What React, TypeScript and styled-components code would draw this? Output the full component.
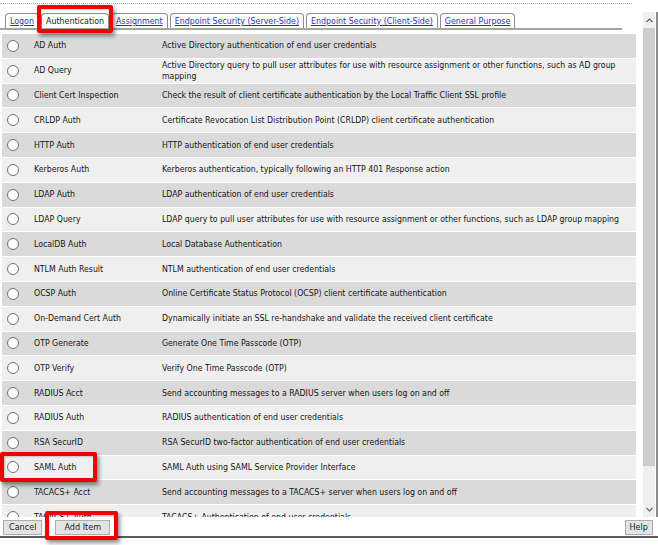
import React from "react";
import styled, { createGlobalStyle } from "styled-components";

const GlobalStyle = createGlobalStyle`
  html, body {
    margin: 0;
    padding: 0;
    background: #ffffff;
  }
  body {
    font-family: "DejaVu Sans Condensed", "Liberation Sans", Arial, sans-serif;
    overflow: hidden;
  }
`;

const Frame = styled.div`
  position: relative;
  width: 658px;
  height: 545px;
  background: #ffffff;
  overflow: hidden;
`;

const TopRule = styled.div`
  height: 3px;
  margin-right: 26px;
  border-bottom: 1px dotted #b4b4b4;
`;

const Body = styled.div`
  display: flex;
  height: 505px;
  margin-top: 8px;
  border-right: 2px solid #8a8a8a;
`;

const Pane = styled.div`
  display: flex;
  flex-direction: column;
  width: 643px;
  overflow: hidden;
`;

const TabBar = styled.div`
  display: flex;
  align-items: flex-end;
  gap: 2px;
  height: 15px;
  margin: 1px 21px 0 0;
  padding-left: 5px;
  border-bottom: 2px solid #a3a3a3;
`;

const Tab = styled.div<{ $active?: boolean }>`
  height: 14px;
  padding: 0 4px;
  border: 1px solid #8c8c8c;
  border-bottom: none;
  border-radius: 4px 4px 0 0;
  background: #ffffff;
  font-size: 8.8px;
  line-height: 15px;
  white-space: nowrap;
  color: ${(p) => (p.$active ? "#1a1a1a" : "#2e2ec0")};
  text-decoration: ${(p) => (p.$active ? "none" : "underline")};
`;

const List = styled.div`
  display: flex;
  flex-direction: column;
  gap: 1px;
  margin: 4px 7px 0 2px;
`;

const Row = styled.div<{ $shade: boolean }>`
  display: flex;
  align-items: center;
  flex-shrink: 0;
  height: 23.8px;
  padding-left: 5px;
  background: ${(p) => (p.$shade ? "#dadada" : "#efefef")};
  font-size: 8.7px;
  line-height: 11px;
  color: #151515;
`;

const Radio = styled.span`
  flex-shrink: 0;
  width: 10px;
  height: 10px;
  border: 1px solid #727272;
  border-radius: 50%;
  background: #ffffff;
  box-shadow: inset 0 0 1px rgba(0, 0, 0, 0.15);
  margin-right: 15px;
`;

const Name = styled.span`
  flex-shrink: 0;
  width: 128px;
  white-space: nowrap;
`;

const Desc = styled.span`
  flex: 1;
  padding-right: 4px;
`;

const ScrollBar = styled.div`
  display: flex;
  flex-direction: column;
  width: 12px;
  background: #f0f0f0;
`;

const Arrow = styled.div`
  height: 16px;
  display: flex;
  align-items: center;
  justify-content: center;
  color: #606060;
`;

const Thumb = styled.div`
  height: 438px;
  background: #cdcdcd;
`;

const Track = styled.div`
  flex: 1;
`;

const Footer = styled.div`
  display: flex;
  align-items: center;
  height: 18px;
  padding: 1px 5px 0 3px;
  border-bottom: 2px solid #5a5a5a;
`;

const Button = styled.div<{ $pad?: number; $gap?: number }>`
  height: 13px;
  padding: 0 ${(p) => p.$pad ?? 5}px;
  margin-right: ${(p) => p.$gap ?? 0}px;
  border: 1px solid #adadad;
  background: #e3e3e3;
  font-size: 9px;
  line-height: 13px;
  color: #1e1e1e;
`;

const Spacer = styled.div`
  flex: 1;
`;

const Highlight = styled.div`
  position: absolute;
  border: 4px solid #f00000;
  border-radius: 2px;
  box-shadow: 2px 3px 4px rgba(0, 0, 0, 0.45), inset 1px 1px 2px rgba(0, 0, 0, 0.2);
  pointer-events: none;
`;

const tabs = [
  "Logon",
  "Authentication",
  "Assignment",
  "Endpoint Security (Server-Side)",
  "Endpoint Security (Client-Side)",
  "General Purpose",
];

const items: [string, string][] = [
  ["AD Auth", "Active Directory authentication of end user credentials"],
  [
    "AD Query",
    "Active Directory query to pull user attributes for use with resource assignment or other functions, such as AD group mapping",
  ],
  ["Client Cert Inspection", "Check the result of client certificate authentication by the Local Traffic Client SSL profile"],
  ["CRLDP Auth", "Certificate Revocation List Distribution Point (CRLDP) client certificate authentication"],
  ["HTTP Auth", "HTTP authentication of end user credentials"],
  ["Kerberos Auth", "Kerberos authentication, typically following an HTTP 401 Response action"],
  ["LDAP Auth", "LDAP authentication of end user credentials"],
  ["LDAP Query", "LDAP query to pull user attributes for use with resource assignment or other functions, such as LDAP group mapping"],
  ["LocalDB Auth", "Local Database Authentication"],
  ["NTLM Auth Result", "NTLM authentication of end user credentials"],
  ["OCSP Auth", "Online Certificate Status Protocol (OCSP) client certificate authentication"],
  ["On-Demand Cert Auth", "Dynamically initiate an SSL re-handshake and validate the received client certificate"],
  ["OTP Generate", "Generate One Time Passcode (OTP)"],
  ["OTP Verify", "Verify One Time Passcode (OTP)"],
  ["RADIUS Acct", "Send accounting messages to a RADIUS server when users log on and off"],
  ["RADIUS Auth", "RADIUS authentication of end user credentials"],
  ["RSA SecurID", "RSA SecurID two-factor authentication of end user credentials"],
  ["SAML Auth", "SAML Auth using SAML Service Provider Interface"],
  ["TACACS+ Acct", "Send accounting messages to a TACACS+ server when users log on and off"],
  ["TACACS+ Auth", "TACACS+ Authentication of end user credentials"],
];

export default function App() {
  return (
    <Frame>
      <GlobalStyle />
      <TopRule />
      <Body>
        <Pane>
          <TabBar>
            {tabs.map((t) => (
              <Tab key={t} $active={t === "Authentication"}>
                {t}
              </Tab>
            ))}
          </TabBar>
          <List>
            {items.map(([name, desc], i) => (
              <Row key={name} $shade={i % 2 === 0}>
                <Radio />
                <Name>{name}</Name>
                <Desc>{desc}</Desc>
              </Row>
            ))}
          </List>
        </Pane>
        <ScrollBar>
          <Arrow>
            <svg width="7" height="5" viewBox="0 0 7 5">
              <path d="M0.5 4L3.5 1L6.5 4" fill="none" stroke="currentColor" strokeWidth="1.2" />
            </svg>
          </Arrow>
          <Thumb />
          <Track />
          <Arrow>
            <svg width="7" height="5" viewBox="0 0 7 5">
              <path d="M0.5 1L3.5 4L6.5 1" fill="none" stroke="currentColor" strokeWidth="1.2" />
            </svg>
          </Arrow>
        </ScrollBar>
      </Body>
      <Footer>
        <Button $gap={13}>Cancel</Button>
        <Button $pad={8}>Add Item</Button>
        <Spacer />
        <Button $pad={4}>Help</Button>
      </Footer>
      <Highlight style={{ left: 37, top: 5, width: 68, height: 20 }} />
      <Highlight style={{ left: 0, top: 452, width: 89, height: 22 }} />
      <Highlight style={{ left: 45, top: 511, width: 65, height: 21 }} />
    </Frame>
  );
}
